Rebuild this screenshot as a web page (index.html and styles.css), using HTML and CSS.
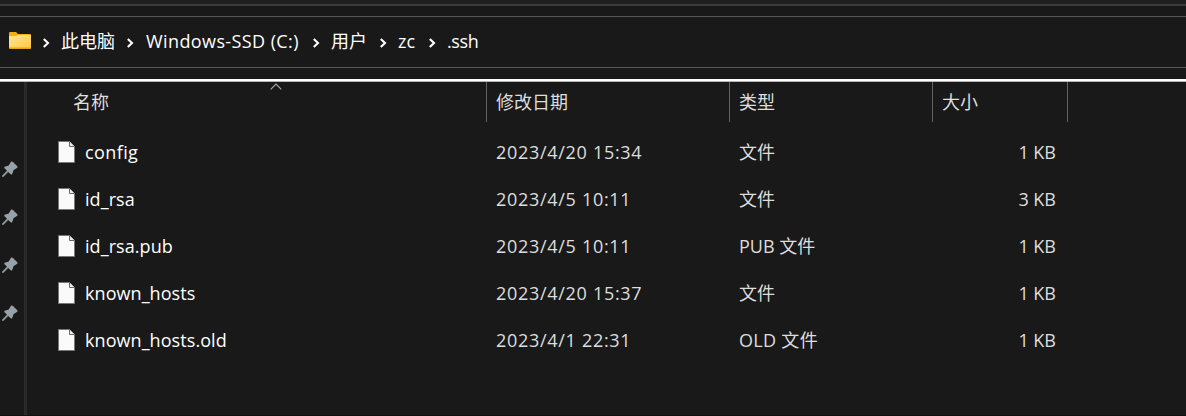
FILE: index.html
```html
<!DOCTYPE html>
<html lang="zh-CN">
<head>
<meta charset="utf-8">
<title>.ssh</title>
<link rel="stylesheet" href="styles.css">
</head>
<body>
<svg class="defs" width="0" height="0">
  <defs>
    <linearGradient id="gold" x1="0" y1="0" x2="1" y2="1"><stop offset="0" stop-color="#ffe49a"/><stop offset="1" stop-color="#ffca3e"/></linearGradient>
    <symbol id="chev" viewBox="0 0 8 10"><path d="M1.8 1 6 5 1.8 9" fill="none" stroke="#fff" stroke-width="2.1"/></symbol>
    <symbol id="file" viewBox="0 0 17 22"><path d="M.5.5H11.5L16.5 5.5V21.5H.5Z" fill="#fafafa" stroke="#777"/><path d="M11.5.5V5.5H16.5" fill="#eee" stroke="#666"/></symbol>
    <symbol id="pin" viewBox="0 0 16 17"><path d="M9.2.5Q10 .2 10.7.8L15.3 5.2Q16 6 15.2 6.8L11.5 9.3 10.2 13.2Q9.4 14 8.7 13.2L6.1 10.9 1.5 15.7.1 16 .3 14.6 5 9.7 2.3 7Q1.8 6.2 2.7 5.7L6.7 4.4Z" fill="#96a1a8"/></symbol>
  </defs>
</svg>
<div class="window">
  <div class="toolbar"></div>
  <nav class="address">
    <svg class="folder" width="22" height="17" viewBox="0 0 22 17"><path d="M0 1Q0 0 1 0H7L9 2H21Q22 2 22 3V8H0Z" fill="#f6ad13"/><path d="M0 4H7L9 3H22V16H0Z" fill="url(#gold)"/><path d="M0 15.5H22V16.2Q22 17 21 17H1Q0 17 0 16.2Z" fill="#e8a317"/></svg>
    <svg class="chev"><use href="#chev"/></svg><span class="crumb c-pc">此电脑</span>
    <svg class="chev"><use href="#chev"/></svg><span class="crumb c-drive">Windows-SSD (C:)</span>
    <svg class="chev"><use href="#chev"/></svg><span class="crumb c-users">用户</span>
    <svg class="chev"><use href="#chev"/></svg><span class="crumb c-zc">zc</span>
    <svg class="chev"><use href="#chev"/></svg><span class="crumb c-ssh">.ssh</span>
  </nav>
  <main class="body">
    <aside class="side">
      <svg class="pin"><use href="#pin"/></svg><svg class="pin"><use href="#pin"/></svg><svg class="pin"><use href="#pin"/></svg><svg class="pin"><use href="#pin"/></svg>
    </aside>
    <section class="list">
      <header class="row head">
        <span class="name">名称</span><span class="date">修改日期</span><span class="type">类型</span><span class="size">大小</span>
        <svg class="sort" width="12" height="7" viewBox="0 0 12 7"><path d="M.7 6.3 6 1 11.3 6.3" fill="none" stroke="#aaa" stroke-width="1.1"/></svg>
      </header>
      <div class="row"><span class="name"><svg class="file"><use href="#file"/></svg><b class="wide">config</b></span><span class="date">2023/4/20 15:34</span><span class="type">文件</span><span class="size">1 KB</span></div>
      <div class="row"><span class="name"><svg class="file"><use href="#file"/></svg><b>id_rsa</b></span><span class="date">2023/4/5 10:11</span><span class="type">文件</span><span class="size">3 KB</span></div>
      <div class="row"><span class="name"><svg class="file"><use href="#file"/></svg><b>id_rsa.pub</b></span><span class="date">2023/4/5 10:11</span><span class="type">PUB 文件</span><span class="size">1 KB</span></div>
      <div class="row"><span class="name"><svg class="file"><use href="#file"/></svg><b>known_hosts</b></span><span class="date">2023/4/20 15:37</span><span class="type">文件</span><span class="size">1 KB</span></div>
      <div class="row"><span class="name"><svg class="file"><use href="#file"/></svg><b>known_hosts.old</b></span><span class="date">2023/4/1 22:31</span><span class="type old">OLD 文件</span><span class="size">1 KB</span></div>
    </section>
  </main>
</div>
</body>
</html>
```
FILE: styles.css
```css
* { box-sizing: border-box; }
body { margin: 0; background: #191919; font: 18px/26px "Open Sans", "Noto Sans CJK SC", sans-serif; color: #fff; overflow: hidden; }
.defs { position: absolute; }
.window { width: 1186px; height: 416px; display: flex; flex-direction: column; border-bottom: 1px solid #101010; }
.toolbar { height: 6px; flex: none; background: #202020; border-bottom: 2px solid #3b3b3b; }
.address { height: 52px; flex: none; margin: 10px 0 11px; padding-left: 9px; border-top: 1px solid #575757; border-bottom: 1px solid #575757; display: flex; align-items: center; }
.folder { margin-right: 11px; margin-bottom: 3px; }
.chev { width: 8px; height: 10px; flex: none; margin-top: 1px; }
.crumb { flex: none; white-space: nowrap; margin-left: 11px; margin-bottom: 2px; }
.c-pc { width: 65px; }
.c-drive { width: 166px; margin-left: 12px; letter-spacing: .4px; }
.c-users { width: 48px; }
.c-zc { width: 30px; }
.c-ssh { width: 40px; letter-spacing: -.4px; }
.body { flex: 1; border-top: 2px solid #fff; box-shadow: inset 0 1px #b5b5b5; display: flex; min-height: 0; }
.side { width: 27px; margin-top: 1px; padding: 79px 0 0 2px; border-right: 3px solid #2a2a2a; display: flex; flex-direction: column; gap: 31px; }
.pin { width: 16px; height: 17px; flex: none; }
.list { flex: 1; margin-top: 1px; }
.row { display: grid; grid-template-columns: 460px 243px 203px 135px; height: 47px; align-items: center; color: #dedede; white-space: nowrap; }
.head { height: 40px; margin-bottom: 6px; position: relative; }
.head span { height: 40px; line-height: 41px; border-right: 1px solid #626262; }
.name { padding-left: 31px; display: flex; align-items: center; }
.head .name { padding-left: 46px; }
.file { width: 17px; height: 22px; margin-right: 10px; }
.name b { font-weight: 400; color: #fff; letter-spacing: .07px; }
.name .wide { letter-spacing: .4px; }
.date, .type { padding-left: 9px; }
.row:not(.head) .date { letter-spacing: .7px; }
.old { letter-spacing: .3px; }
.size { text-align: right; padding-right: 12px; }
.head .size { text-align: left; padding-left: 9px; }
.sort { position: absolute; left: 243px; top: 1px; }
```
